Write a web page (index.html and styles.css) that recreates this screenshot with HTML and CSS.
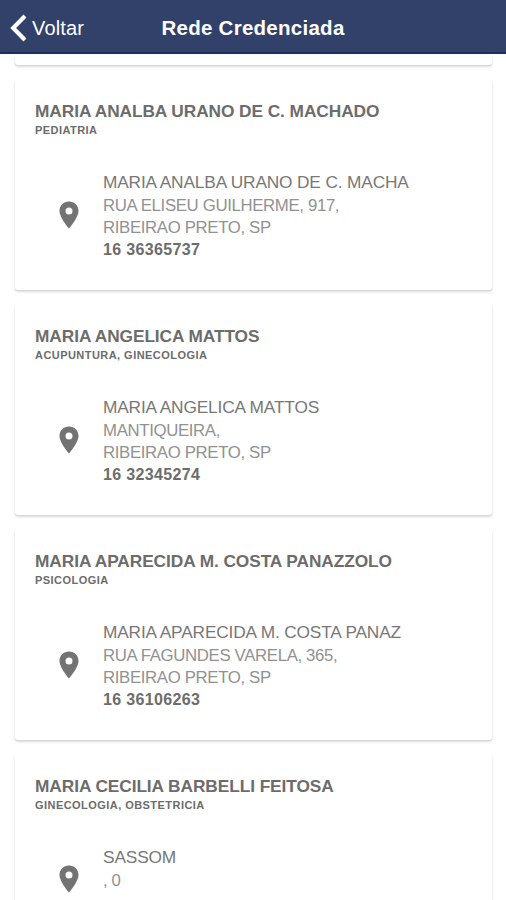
FILE: index.html
```html
<!DOCTYPE html>
<html lang="pt-BR">
<head>
<meta charset="utf-8">
<title>Rede Credenciada</title>
<link rel="stylesheet" href="styles.css">
</head>
<body>
<header class="navbar">
  <div class="back">
    <svg class="chevron" viewBox="0 0 18 28" width="18" height="28"><path d="M15 2 L3.2 14 L15 26" fill="none" stroke="#fff" stroke-width="4.2"/></svg>
    <span class="back-label">Voltar</span>
  </div>
  <h1 class="title">Rede Credenciada</h1>
</header>
<main class="list">
  <article class="card card-previous"></article>
  <article class="card">
    <h2 class="name">MARIA ANALBA URANO DE C. MACHADO</h2>
    <p class="specialty">PEDIATRIA</p>
    <div class="place">
      <svg class="pin" viewBox="0 0 20 28" width="20" height="28"><path fill-rule="evenodd" d="M10 0.5C4.6 0.5 0.5 4.6 0.5 9.9C0.5 16.5 10 27.5 10 27.5S19.5 16.5 19.5 9.9C19.5 4.6 15.4 0.5 10 0.5ZM10 6.4A3.5 3.5 0 1 1 10 13.4A3.5 3.5 0 1 1 10 6.4Z"/></svg>
      <div class="details">
        <p class="clinic">MARIA ANALBA URANO DE C. MACHA</p>
        <p class="address">RUA ELISEU GUILHERME, 917,</p>
        <p class="address">RIBEIRAO PRETO, SP</p>
        <p class="phone">16 36365737</p>
      </div>
    </div>
  </article>
  <article class="card">
    <h2 class="name">MARIA ANGELICA MATTOS</h2>
    <p class="specialty">ACUPUNTURA, GINECOLOGIA</p>
    <div class="place">
      <svg class="pin" viewBox="0 0 20 28" width="20" height="28"><path fill-rule="evenodd" d="M10 0.5C4.6 0.5 0.5 4.6 0.5 9.9C0.5 16.5 10 27.5 10 27.5S19.5 16.5 19.5 9.9C19.5 4.6 15.4 0.5 10 0.5ZM10 6.4A3.5 3.5 0 1 1 10 13.4A3.5 3.5 0 1 1 10 6.4Z"/></svg>
      <div class="details">
        <p class="clinic">MARIA ANGELICA MATTOS</p>
        <p class="address">MANTIQUEIRA,</p>
        <p class="address">RIBEIRAO PRETO, SP</p>
        <p class="phone">16 32345274</p>
      </div>
    </div>
  </article>
  <article class="card">
    <h2 class="name">MARIA APARECIDA M. COSTA PANAZZOLO</h2>
    <p class="specialty">PSICOLOGIA</p>
    <div class="place">
      <svg class="pin" viewBox="0 0 20 28" width="20" height="28"><path fill-rule="evenodd" d="M10 0.5C4.6 0.5 0.5 4.6 0.5 9.9C0.5 16.5 10 27.5 10 27.5S19.5 16.5 19.5 9.9C19.5 4.6 15.4 0.5 10 0.5ZM10 6.4A3.5 3.5 0 1 1 10 13.4A3.5 3.5 0 1 1 10 6.4Z"/></svg>
      <div class="details">
        <p class="clinic">MARIA APARECIDA M. COSTA PANAZ</p>
        <p class="address">RUA FAGUNDES VARELA, 365,</p>
        <p class="address">RIBEIRAO PRETO, SP</p>
        <p class="phone">16 36106263</p>
      </div>
    </div>
  </article>
  <article class="card">
    <h2 class="name">MARIA CECILIA BARBELLI FEITOSA</h2>
    <p class="specialty">GINECOLOGIA, OBSTETRICIA</p>
    <div class="place">
      <svg class="pin" viewBox="0 0 20 28" width="20" height="28"><path fill-rule="evenodd" d="M10 0.5C4.6 0.5 0.5 4.6 0.5 9.9C0.5 16.5 10 27.5 10 27.5S19.5 16.5 19.5 9.9C19.5 4.6 15.4 0.5 10 0.5ZM10 6.4A3.5 3.5 0 1 1 10 13.4A3.5 3.5 0 1 1 10 6.4Z"/></svg>
      <div class="details details-short">
        <p class="clinic">SASSOM</p>
        <p class="address">, 0</p>
      </div>
    </div>
  </article>
</main>
</body>
</html>
```

FILE: styles.css
```css
* { box-sizing: border-box; }

body {
  margin: 0;
  height: 900px;
  display: flex;
  flex-direction: column;
  overflow: hidden;
  background: #fff;
  font-family: "Liberation Sans", Arial, sans-serif;
}

h1, h2, p { margin: 0; }

.navbar {
  flex: none;
  height: 54px;
  display: grid;
  grid-template-columns: 100px 1fr 100px;
  align-items: center;
  background: #31416a;
  border-bottom: 2px solid #1b2f62;
  color: #fff;
}

.back {
  display: flex;
  align-items: center;
  gap: 4px;
  padding: 3px 0 0 10px;
}

.back-label {
  font-size: 20px;
  line-height: 24px;
  letter-spacing: 0.15px;
}

.title {
  padding-top: 3px;
  text-align: center;
  font-size: 20.5px;
  line-height: 24px;
  letter-spacing: 0.27px;
  white-space: nowrap;
}

.list {
  flex: 1;
  min-height: 0;
  overflow: hidden;
  padding: 0 14px 0 15px;
  display: flex;
  flex-direction: column;
  gap: 14px;
}

.card {
  flex: none;
  height: 211px;
  padding: 21px 20px 0;
  border-radius: 3px;
  background: #fff;
  box-shadow: 0 1px 1px #d6d6d6, 0 2px 3px #dedede;
  color: #6c6c6c;
  white-space: nowrap;
}

.card-previous {
  height: 11px;
  padding: 0;
  border-radius: 0 0 3px 3px;
}

.name {
  font-size: 17.3px;
  line-height: 22px;
  letter-spacing: -0.07px;
}

.specialty {
  font-size: 11px;
  line-height: 16px;
  font-weight: bold;
  letter-spacing: 0.45px;
}

.place {
  display: flex;
  align-items: center;
  margin-top: 33px;
  padding-left: 24px;
  gap: 24px;
}

.pin {
  fill: #737373;
  margin-bottom: 2px;
}

.details { height: 90px; }

.details-short { height: 68px; }

.clinic, .address {
  font-size: 17.3px;
  line-height: 22.5px;
  letter-spacing: -0.15px;
  color: #777;
}

.clinic { margin-bottom: 1px; }

.address {
  font-size: 16.8px;
  letter-spacing: -0.35px;
  color: #919191;
}

.phone {
  margin-top: -1px;
  font-size: 16px;
  line-height: 22px;
  font-weight: bold;
  letter-spacing: 0.35px;
}
```
